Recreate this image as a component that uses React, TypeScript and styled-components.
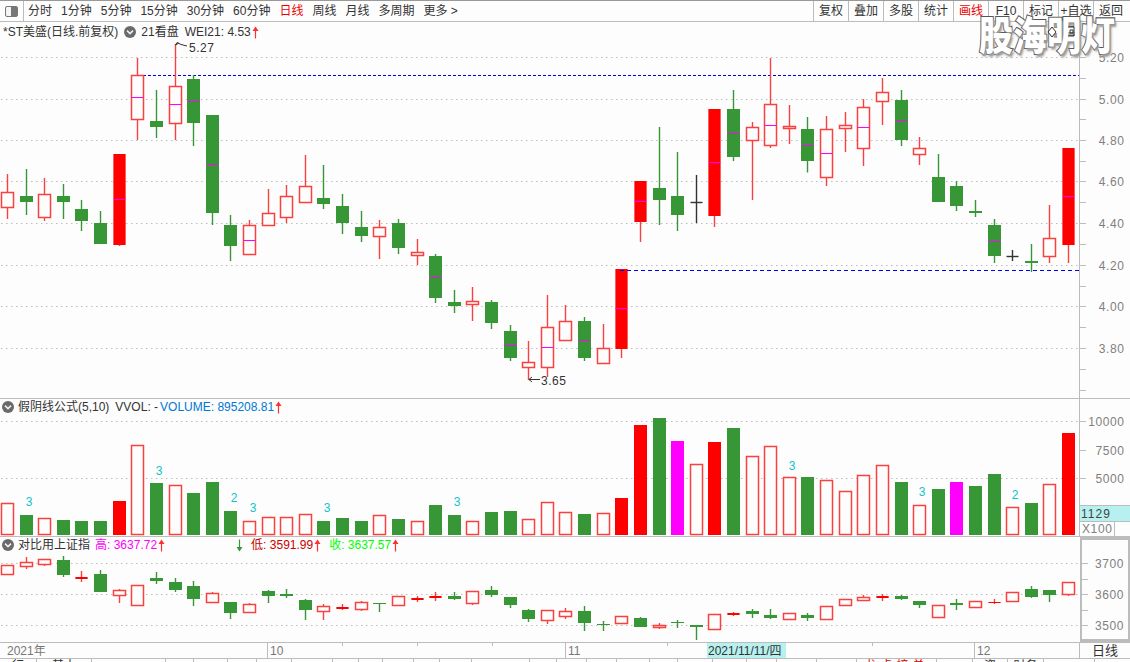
import React from 'react';
import styled, {createGlobalStyle} from "styled-components";

const BG = '#fdfdfd';
const LINE = '#bcbcbc';
const RED = '#fb4040';
const SOLID = '#ff0000';
const GREEN = '#379737';
const PINK = '#ff00ff';
const PLOT_W = 1079;

// g = green, h = hollow red, r = solid red, k = black cross
type Candle = [string, number, number, number, number, number?];
type Bar = [string, number];

const priceCandles: Candle[] = [
  ['h', 174, 192, 207, 219], ['g', 169, 196, 202, 215], ['h', 178, 194, 217, 221], ['g', 184, 196, 202, 219],
  ['g', 200, 209, 221, 231], ['g', 211, 223, 244, 244], ['r', 154, 154, 245, 246, 199], ['h', 58, 75, 119, 140, 97],
  ['g', 90, 121, 127, 138], ['h', 44, 86, 123, 140, 104], ['g', 75, 79, 123, 146, 101], ['g', 115, 115, 213, 225, 164],
  ['g', 215, 225, 246, 261], ['h', 220, 225, 254, 254, 240], ['h', 189, 213, 225, 225], ['h', 185, 196, 217, 223],
  ['h', 155, 186, 202, 202], ['g', 165, 198, 204, 209], ['g', 194, 206, 223, 234], ['g', 211, 227, 236, 242],
  ['h', 220, 227, 236, 259], ['g', 219, 223, 248, 254], ['h', 239, 252, 254.5, 265], ['g', 254, 256, 298, 303, 277],
  ['g', 290, 302, 306, 313], ['h', 287, 300.5, 304, 321], ['g', 300, 302, 323, 329], ['g', 325, 331, 358, 361, 345],
  ['h', 341, 361.5, 367, 380], ['h', 295, 327, 367, 377, 347], ['h', 305, 321, 340, 341], ['g', 317, 321, 358, 361, 340],
  ['h', 324, 348, 363, 363], ['r', 269, 269, 349, 358, 308], ['r', 181, 181, 222, 242, 201], ['g', 127, 188, 200, 225],
  ['g', 152, 196, 215, 231], ['k', 175, 202, 202, 223], ['r', 109, 109, 216, 227, 162], ['g', 90, 109, 157, 161, 133],
  ['h', 122, 127, 140, 200], ['h', 58, 104, 144.5, 148, 124.5], ['h', 105, 125.5, 128, 144], ['g', 117, 129, 161, 172.5, 145],
  ['h', 116, 129, 177, 186, 153], ['h', 112, 125, 128, 152], ['h', 99, 107, 148, 166, 127], ['h', 78, 92, 100.5, 125],
  ['g', 90, 100, 140, 146, 120], ['h', 137, 148, 154, 165], ['g', 154, 177, 202, 202], ['g', 181, 186, 206, 211],
  ['g', 200, 211, 213, 217], ['g', 219, 225, 256, 263, 241], ['k', 250, 256, 256, 261], ['g', 244, 261, 263, 272],
  ['h', 205, 238, 256, 263], ['r', 148, 148, 245, 263, 196],
];

const volumeBars: Bar[] = [
  ['h', 503], ['g', 515], ['h', 518], ['g', 520], ['g', 521], ['g', 521], ['r', 501], ['h', 445], ['g', 483], ['h', 485],
  ['g', 493], ['g', 482], ['g', 511], ['h', 521], ['h', 517], ['h', 517], ['h', 514], ['g', 521], ['g', 518], ['g', 521],
  ['h', 515], ['g', 519], ['h', 521], ['g', 505], ['g', 515], ['h', 521], ['g', 512], ['g', 511], ['h', 519], ['h', 502],
  ['h', 512], ['g', 514], ['h', 513], ['r', 498], ['r', 425], ['g', 418], ['p', 441], ['h', 464], ['r', 442], ['g', 428],
  ['h', 456], ['h', 446], ['h', 477], ['g', 477], ['h', 480], ['h', 491], ['h', 475], ['h', 465], ['g', 482], ['h', 505],
  ['g', 489], ['p', 482], ['g', 486], ['g', 474], ['h', 507], ['g', 503], ['h', 484], ['r', 433],
];

const indexCandles: Candle[] = [
  ['h', 565, 565, 574, 575], ['h', 557, 562, 566, 569], ['h', 559, 559, 564, 566], ['g', 556, 560, 575, 577],
  ['r', 571, 577, 579, 582], ['g', 570, 574, 592, 592], ['h', 589, 590, 595, 603], ['h', 585, 585, 605, 605],
  ['g', 572, 578, 581, 584], ['g', 578, 582, 590, 592], ['g', 581, 586, 599, 606], ['h', 592, 593, 602, 603],
  ['g', 602, 602, 613, 619], ['h', 603, 604, 612, 612], ['g', 590, 591, 596, 603], ['g', 589, 594, 596, 598],
  ['g', 599, 600, 610, 620], ['h', 604, 606, 611, 620], ['r', 604, 607, 609, 610], ['h', 601, 602, 609, 611],
  ['g', 603, 603, 604, 612], ['h', 596, 596, 605, 605], ['r', 596, 598, 600, 602], ['r', 592, 596, 598, 601],
  ['g', 592, 596, 599, 600], ['h', 591, 591, 603, 605], ['g', 586, 590, 595, 597], ['g', 597, 597, 605, 608],
  ['g', 609, 610, 619, 622], ['h', 610, 610, 620, 624], ['h', 608, 611, 616, 619], ['g', 606, 611, 623, 631],
  ['g', 621, 624, 625, 631], ['h', 616, 616, 623, 623], ['g', 617, 618, 627, 627], ['h', 623, 625, 627, 629],
  ['g', 620, 622, 623, 628], ['g', 625, 625, 627, 640], ['h', 614, 614, 629, 629], ['r', 612, 613, 615, 616],
  ['g', 609, 611, 614, 618], ['g', 609, 615, 618, 619], ['h', 613, 613, 619, 619], ['g', 613, 615, 618, 621],
  ['h', 606, 606, 619, 619], ['h', 599, 599, 605, 605], ['h', 595, 597, 600, 600], ['r', 594, 596, 598, 601],
  ['g', 595, 596, 599, 600], ['g', 601, 601, 605, 608], ['h', 605, 605, 617, 617], ['g', 599, 603, 605, 610],
  ['h', 601, 601, 607, 607], ['r', 599, 602, 603, 604], ['h', 592, 592, 601, 601], ['g', 586, 589, 597, 598],
  ['g', 590, 590, 595, 602], ['h', 582, 582, 594, 596],
];

const counts: [number, number, string][] = [
  [29, 506, '3'], [159, 475, '3'], [234, 502, '2'], [253, 512, '3'], [327, 512, '3'], [457, 506, '3'],
  [792, 470, '3'], [922, 496, '3'], [1015, 499, '2'],
];

const priceGrid = [57, 99, 140, 181, 223, 265, 306, 348];
const volumeGrid = [421, 478];
const indexGrid = [563, 594, 625];

const priceTicks = [
  {y: 57, label: '5.20'}, {y: 78}, {y: 99, label: '5.00'}, {y: 119}, {y: 140, label: '4.80'}, {y: 161},
  {y: 181, label: '4.60'}, {y: 202}, {y: 223, label: '4.40'}, {y: 244}, {y: 265, label: '4.20'}, {y: 286},
  {y: 306, label: '4.00'}, {y: 327}, {y: 348, label: '3.80'}, {y: 369}, {y: 390},
];
const volumeTicks = [{y: 421, label: '10000'}, {y: 450, label: '7500'}, {y: 478, label: '5000'}];
const indexTicks = [{y: 563, label: '3700'}, {y: 579}, {y: 594, label: '3600'}, {y: 610}, {y: 625, label: '3500'}];

const leftTabs = ['分时', '1分钟', '5分钟', '15分钟', '30分钟', '60分钟', '日线', '周线', '月线', '多周期', '更多 >'];
const rightTabs = ['复权', '叠加', '多股', '统计', '画线', 'F10', '标记', '+自选', '返回'];

const footerTabs: [number, string, boolean?][] = [
  [37, '行'], [55, '基本'], [74, '+'], [28, ''], [34, ''], [29, ''], [35, ''], [41, ''], [26, ''], [24, ''], [31, ''],
  [26, ''], [32, ''], [58, ''], [27, ''], [30, ''], [30, ''], [33, ''], [28, ''], [35, ''], [34, ''], [30, ''], [40, ''],
  [40, ''], [80, '龙虎榜单', true], [36, '+'], [35, '资'], [36, '财务'], [51, ''],
];

const GlobalStyle = createGlobalStyle`
  html, body {
    margin: 0;
    height: 662px;
    overflow: hidden;
    background: ${BG};
  }
`;

const Page = styled.div`
  position: relative;
  width: 1130px;
  height: 662px;
  overflow: hidden;
  background: ${BG};
  color: #333;
  font: 12px/1 "Liberation Sans", "Noto Sans CJK SC", sans-serif;
`;

const Toolbar = styled.div`
  display: flex;
  align-items: stretch;
  height: 20px;
  border-top: 1px solid #999;
  border-bottom: 1px solid ${LINE};
`;

const PanelToggle = styled.div`
  display: flex;
  align-items: center;
  justify-content: center;
  width: 23px;
  border-right: 1px solid ${LINE};
`;

const LeftTabs = styled.div`
  display: flex;
  align-items: center;
  flex: 1;
  gap: 9px;
  padding-left: 4px;
`;

const Tab = styled.span<{$active?: boolean}>`
  white-space: nowrap;
  color: ${p => p.$active ? '#f00000' : '#333'};
`;

const RightTabs = styled.div`
  display: flex;
  padding-right: 2px;
`;

const RightTab = styled.div<{$active?: boolean}>`
  display: flex;
  align-items: center;
  justify-content: center;
  width: 34px;
  border-left: 1px solid ${LINE};
  white-space: nowrap;
  color: ${p => p.$active ? '#f00000' : '#333'};
`;

const Pane = styled.div<{$height: number}>`
  display: flex;
  height: ${p => p.$height}px;
  border-bottom: 1px solid ${LINE};
`;

const Plot = styled.div`
  position: relative;
  width: ${PLOT_W}px;
`;

const PlotSvg = styled.svg`
  display: block;
`;

const Legend = styled.div<{$left?: number; $top?: number}>`
  position: absolute;
  left: ${p => p.$left ?? 2}px;
  top: ${p => p.$top ?? 1}px;
  display: flex;
  align-items: center;
  height: 14px;
  white-space: nowrap;
  color: #333;
`;

const LegendText = styled.span<{$color?: string; $left?: number}>`
  color: ${p => p.$color || '#333'};
  margin-left: ${p => p.$left || 0}px;
`;

const AxisColumn = styled.div`
  display: flex;
  flex-direction: column;
  width: 50px;
  border-left: 1px solid ${LINE};
`;

const FramedAxis = styled.div`
  width: 46px;
  border: 3px solid ${LINE};
  border-left-width: 2px;
  margin-left: 1px;
`;

const AxisSvg = styled.svg`
  display: block;
  flex: 1;
`;

const AxisLabel = styled.text`
  font: 12px "Liberation Sans", sans-serif;
  fill: #808080;
  letter-spacing: 0.6px;
`;

const ChartNote = styled.text`
  font: 12px "Liberation Sans", sans-serif;
  fill: #333;
  letter-spacing: 0.5px;
`;

const CountLabel = styled.text`
  font: 12px "Liberation Sans", sans-serif;
  fill: #10c4c8;
  text-anchor: middle;
`;

const ScaleValue = styled.div`
  height: 15px;
  padding-left: 1px;
  line-height: 16px;
  letter-spacing: 1px;
  background: #b7f1ef;
  border-top: 1px solid ${LINE};
  border-bottom: 1px solid ${LINE};
  color: #444;
`;

const ScaleUnit = styled.div`
  width: 32px;
  height: 14px;
  padding-left: 2px;
  line-height: 15px;
  border-right: 1px solid ${LINE};
  color: #808080;
  letter-spacing: 0.6px;
`;

const TimeRow = styled.div`
  position: relative;
  display: flex;
  height: 15px;
  border-bottom: 1px solid ${LINE};
  color: #777;
  line-height: 16px;
`;

const TimeCell = styled.div<{$width: number; $first?: boolean; $blank?: boolean}>`
  width: ${p => p.$width}px;
  box-sizing: border-box;
  padding-left: ${p => p.$first ? 7 : 2}px;
  border-left: ${p => p.$first || p.$blank ? 'none' : `1px solid ${LINE}`};
  white-space: nowrap;
`;

const DateCell = styled.div`
  width: 79px;
  box-sizing: border-box;
  padding-left: 1px;
  white-space: nowrap;
  background: #b7f1ef;
  color: #333;
`;

const PeriodCell = styled.div`
  flex: 1;
  text-align: center;
  border-left: 1px solid ${LINE};
  color: #333;
  font-size: 13px;
`;

const TimeTicks = styled.svg`
  position: absolute;
  left: 0;
  top: 0;
  pointer-events: none;
`;

const Footer = styled.div`
  display: flex;
  height: 3px;
  overflow: hidden;
`;

const FooterTab = styled.div<{$width: number; $red?: boolean}>`
  width: ${p => p.$width}px;
  box-sizing: border-box;
  flex: none;
  text-align: center;
  border-right: 1px solid ${LINE};
  line-height: 14px;
  letter-spacing: ${p => p.$red ? 4 : 0}px;
  color: ${p => p.$red ? '#e00000' : '#333'};
`;

const Watermark = styled.div`
  position: absolute;
  left: 979px;
  top: 11px;
  font: 900 34px/40px "Noto Sans CJK SC", sans-serif;
  color: #fff;
  -webkit-text-stroke: 1.8px #555;
  paint-order: stroke fill;
  text-shadow: 2px 2px 2px #999;
  white-space: nowrap;
  transform: scaleY(1.16);
  transform-origin: top left;
`;

const WatermarkMarks = styled.svg`
  position: absolute;
  left: 1046px;
  top: 25px;
`;

const ChevronIcon = styled.svg`
  flex: none;
  display: block;
`;

const ArrowIcon = styled.svg`
  flex: none;
  margin-left: 1px;
`;

const Chevron = () => (
  <ChevronIcon width="12" height="12" viewBox="0 0 12 12">
    <circle cx="6" cy="6" r="6" fill="#6a6a6a"/>
    <path d="M3 4.6 L6 7.6 L9 4.6" fill="none" stroke="#eee" strokeWidth="1.6"/>
  </ChevronIcon>
);

const Arrow = ({color = '#fb3030', down}: {color?: string; down?: boolean}) => (
  <ArrowIcon width="7" height="13" viewBox="0 0 7 13">
    <g transform={down ? 'rotate(180 3.5 6.5)' : undefined}>
      <path d="M3.5 12.5 V3" stroke={color} strokeWidth="1.2"/>
      <path d="M3.5 0.5 L6.5 5 H0.5 Z" fill={color}/>
    </g>
  </ArrowIcon>
);

const snapX = (index: number) => Math.floor(7.5 + index * 18.615) + .5;
const snapY = (y: number) => Math.round(y) + .5;

const CandleMark = ({candle, index}: {candle: Candle; index: number}) => {
  const [kind, high, top, bottom, low, mid] = candle;
  const cx = snapX(index);
  const color = kind === 'g' ? GREEN : kind === 'k' ? '#333' : RED;
  const wick = 1.4;

  if (kind === 'k') {
    return (
      <g stroke={color} strokeWidth={wick}>
        <line x1={cx} x2={cx} y1={high} y2={low}/>
        <line x1={cx - 6} x2={cx + 6} y1={snapY(top)} y2={snapY(top)}/>
      </g>
    );
  }

  return (
    <g>
      <line x1={cx} x2={cx} y1={high} y2={low} stroke={kind === 'g' ? GREEN : RED} strokeWidth={wick}/>
      {kind === 'h' && (
        <rect x={cx - 6} y={snapY(top)} width={12} height={snapY(bottom) - snapY(top)} fill={BG} stroke={RED} strokeWidth={1.5}/>
      )}
      {kind === 'g' && <rect x={cx - 6.5} y={top} width={13} height={bottom - top} fill={GREEN}/>}
      {kind === 'r' && (
        <>
          <rect x={cx - 6.5} y={top} width={13} height={bottom - top} fill="#fb6060"/>
          <rect x={cx - 5.5} y={top} width={11} height={bottom - top} fill={SOLID}/>
        </>
      )}
      {mid !== undefined && (
        <line x1={cx - 6} x2={cx + 6} y1={snapY(mid)} y2={snapY(mid)} stroke={PINK} strokeWidth={1}/>
      )}
    </g>
  );
};

const VolumeBar = ({bar, index}: {bar: Bar; index: number}) => {
  const [kind, top] = bar;
  const cx = snapX(index);
  const bottom = 535;
  if (kind === 'h') {
    return <rect x={cx - 6} y={top + .5} width={12} height={bottom - top - 1} fill={BG} stroke={RED} strokeWidth={1.5}/>;
  }
  const fill = kind === 'g' ? GREEN : kind === 'p' ? PINK : SOLID;
  return <rect x={cx - 6.5} y={top} width={13} height={bottom - top} fill={fill}/>;
};

const Grid = ({rows}: {rows: number[]}) => (
  <g stroke="#bdbdbd" strokeWidth="1" strokeDasharray="1.5 3.5">
    {rows.map(y => <line key={y} x1="1" x2={PLOT_W} y1={y + .5} y2={y + .5}/>)}
  </g>
);

const Axis = ({top, height, ticks, width = 50}: {top: number; height: number; width?: number; ticks: {y: number; label?: string}[]}) => (
  <AxisSvg width={width} height={height} viewBox={`0 ${top} ${width} ${height}`}>
    {ticks.map(t => (
      <g key={t.y}>
        <line x1="0" x2="6" y1={t.y + .5} y2={t.y + .5} stroke={LINE}/>
        {t.label && <AxisLabel x={width === 50 ? 44.5 : 42} y={t.y + 5} textAnchor="end">{t.label}</AxisLabel>}
      </g>
    ))}
  </AxisSvg>
);

const App = () => {
  return (
    <Page>
      <GlobalStyle/>

      <Toolbar>
        <PanelToggle>
          <svg width="13" height="11" viewBox="0 0 13 11">
            <rect x=".5" y=".5" width="12" height="10" rx="1.5" fill="#f4f4f4" stroke="#777"/>
            <rect x="6" y="1" width="6" height="9" fill="#777"/>
          </svg>
        </PanelToggle>
        <LeftTabs>
          {leftTabs.map(t => <Tab key={t} $active={t === '日线'}>{t}</Tab>)}
        </LeftTabs>
        <RightTabs>
          {rightTabs.map(t => <RightTab key={t} $active={t === '画线'}>{t}</RightTab>)}
        </RightTabs>
      </Toolbar>

      <Pane $height={376}>
        <Plot>
          <PlotSvg width={PLOT_W} height={376} viewBox={`0 22 ${PLOT_W} 376`}>
            <Grid rows={priceGrid}/>
            <line x1="138" x2={PLOT_W} y1="75.5" y2="75.5" stroke="#0000d8" strokeWidth="1" strokeDasharray="3 2"/>
            {priceCandles.map((c, i) => <CandleMark key={i} candle={c} index={i}/>)}
            <line x1="620" x2={PLOT_W} y1="270.5" y2="270.5" stroke="#0000f0" strokeWidth="1" strokeDasharray="4 3"/>
            <path d="M175.5 45 L177 42.5 L181 44.5 L187 46 M175.5 45 L179 43" fill="none" stroke="#333"/>
            <ChartNote x="189" y="52">5.27</ChartNote>
            <path d="M529 379.5 H540 M529 379.5 L532 377 M529 379.5 L532 382" fill="none" stroke="#333"/>
            <ChartNote x="541" y="385">3.65</ChartNote>
          </PlotSvg>
          <Legend $left={3} $top={3}>
            <LegendText>*ST美盛(日线.前复权)</LegendText>
            <LegendText $left={6}><Chevron/></LegendText>
            <LegendText $left={5}>21看盘</LegendText>
            <LegendText $left={6}>WEI21: 4.53</LegendText>
            <Arrow/>
          </Legend>
        </Plot>
        <AxisColumn>
          <Axis top={22} height={376} ticks={priceTicks}/>
        </AxisColumn>
      </Pane>

      <Pane $height={137}>
        <Plot>
          <PlotSvg width={PLOT_W} height={137} viewBox={`0 399 ${PLOT_W} 137`}>
            <Grid rows={volumeGrid}/>
            {volumeBars.map((b, i) => <VolumeBar key={i} bar={b} index={i}/>)}
            {counts.map(([x, y, n]) => <CountLabel key={x} x={x} y={y}>{n}</CountLabel>)}
          </PlotSvg>
          <Legend>
            <Chevron/>
            <LegendText $left={4}>假阴线公式(5,10)</LegendText>
            <LegendText $left={6}>VVOL: -</LegendText>
            <LegendText $left={2} $color="#0078d4">VOLUME: 895208.81</LegendText>
            <Arrow/>
          </Legend>
        </Plot>
        <AxisColumn>
          <Axis top={399} height={106} ticks={volumeTicks}/>
          <ScaleValue>1129</ScaleValue>
          <ScaleUnit>X100</ScaleUnit>
        </AxisColumn>
      </Pane>

      <Pane $height={105}>
        <Plot>
          <PlotSvg width={PLOT_W} height={105} viewBox={`0 537 ${PLOT_W} 105`}>
            <Grid rows={indexGrid}/>
            {indexCandles.map((c, i) => <CandleMark key={i} candle={c} index={i}/>)}
          </PlotSvg>
          <Legend>
            <Chevron/>
            <LegendText $left={4}>对比用上证指</LegendText>
            <LegendText $left={5} $color="#ff00ff">高: 3637.72</LegendText>
            <Arrow/>
            <LegendText $left={8} $color="#fff">开: 3602.82</LegendText>
            <Arrow color={GREEN} down/>
            <LegendText $left={8} $color="#c80000">低: 3591.99</LegendText>
            <Arrow/>
            <LegendText $left={8} $color="#00ff00">收: 3637.57</LegendText>
            <Arrow/>
          </Legend>
        </Plot>
        <FramedAxis>
          <Axis top={540} height={99} width={46} ticks={indexTicks}/>
        </FramedAxis>
      </Pane>

      <TimeRow>
        <TimeCell $width={267} $first>2021年</TimeCell>
        <TimeCell $width={298}>10</TimeCell>
        <TimeCell $width={142}>11</TimeCell>
        <DateCell>2021/11/11/四</DateCell>
        <TimeCell $width={188} $blank/>
        <TimeCell $width={105}>12</TimeCell>
        <PeriodCell>日线</PeriodCell>
        <TimeTicks width={PLOT_W} height="15">
          <g stroke={LINE}>
            {[342, 417, 492, 667, 872].map(x => <line key={x} x1={x + .5} x2={x + .5} y1="0" y2="3"/>)}
          </g>
        </TimeTicks>
      </TimeRow>

      <Footer>
        {footerTabs.map(([w, label, red], i) => (
          <FooterTab key={i} $width={w} $red={red}>{label}</FooterTab>
        ))}
      </Footer>

      <Watermark>股海明灯</Watermark>
      <WatermarkMarks width="32" height="14" viewBox="0 0 32 14">
        <path d="M6 2 L10 7 L6 12 L2 7 Z" fill="#fff" stroke="#333"/>
        <path d="M22 2 H28 V11 H22 M24 5 H27 V8 H24 Z" fill="none" stroke="#333"/>
      </WatermarkMarks>
    </Page>
  );
};

export default App;
